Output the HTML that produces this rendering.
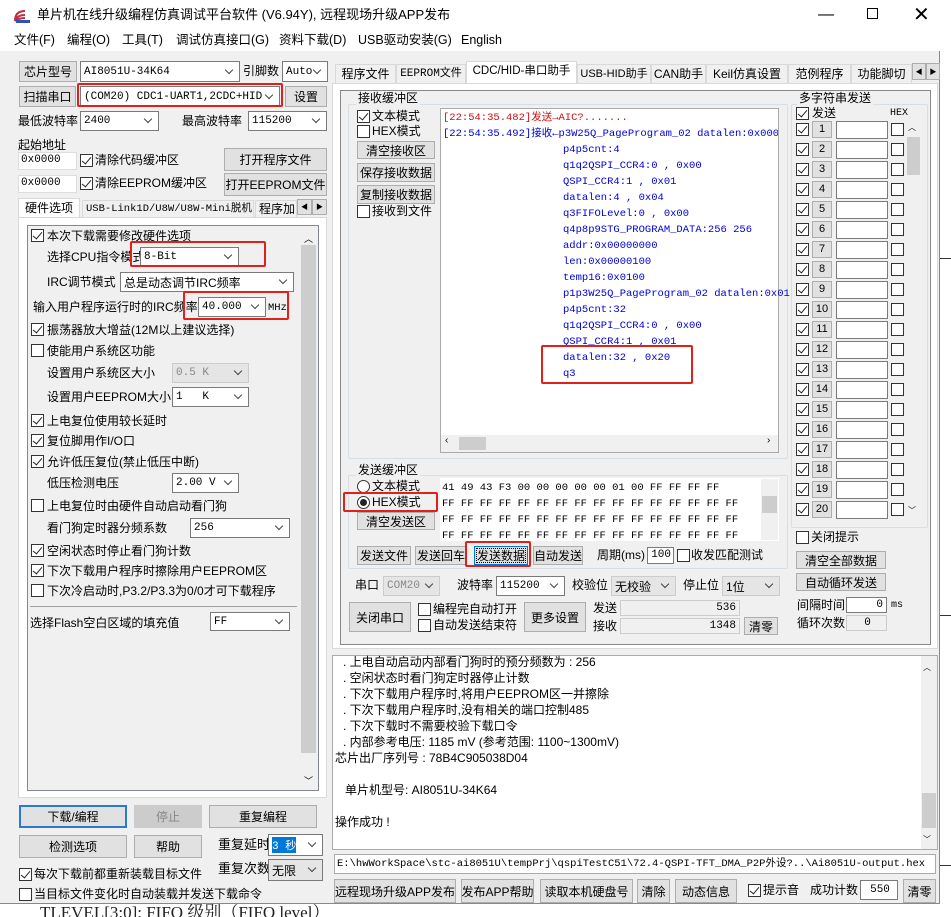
<!DOCTYPE html>
<html><head><meta charset="utf-8">
<style>
*{box-sizing:border-box;margin:0;padding:0}
body{width:951px;height:917px;overflow:hidden;background:#fff;font-family:"Liberation Sans","Noto Sans CJK SC",sans-serif;font-size:12px;color:#000;position:relative}
.a{position:absolute;white-space:nowrap}
.t{position:absolute;white-space:nowrap;line-height:14px}
.b{position:absolute;background:#e1e1e1;border:1px solid #adadad;text-align:center;white-space:nowrap;font-size:12px;display:flex;align-items:center;justify-content:center}
.sel{position:absolute;background:#fff;border:1px solid #7a7a7a;white-space:nowrap;padding-left:3px;font-size:11px;display:flex;align-items:center;font-family:"Liberation Mono","Noto Sans CJK SC",monospace}
.sel.g{background:#e5e5e5;border-color:#ccc;color:#888}
.sel::after{content:"";position:absolute;right:7px;top:calc(50% - 5px);width:5px;height:5px;border-right:1px solid #444;border-bottom:1px solid #444;transform:rotate(45deg)}
.cb{position:absolute;width:13px;height:13px;border:1px solid #333;background:#fff}
.cb.c::after{content:"";position:absolute;left:3px;top:0px;width:4px;height:8px;border-right:1.5px solid #222;border-bottom:1.5px solid #222;transform:rotate(40deg)}
.rd{position:absolute;width:13px;height:13px;border:1px solid #333;border-radius:50%;background:#fff}
.rd.c::after{content:"";position:absolute;left:2px;top:2px;width:7px;height:7px;border-radius:50%;background:#222}
.in{position:absolute;background:#fff;border:1px solid #7a7a7a;font-size:11px;font-family:"Liberation Mono",monospace;padding-left:2px;line-height:15px}
.red{position:absolute;border:2px solid #e0201a;border-radius:2px}
.grp{position:absolute;border:1px solid #d5dfe5;border-radius:2px}
.mono{font-family:"Liberation Mono","Noto Sans CJK SC",monospace;font-size:10.5px}
.tab{position:absolute;top:64px;height:19px;border:1px solid #d9d9d9;border-bottom:none;background:#f0f0f0;font-size:12px;text-align:center;line-height:18px;white-space:nowrap}
.rc{position:absolute;left:563px;color:#0000d8}
.n{position:absolute;width:20px;height:17px;background:#e1e1e1;border:1px solid #adadad;text-align:center;font-size:11px;line-height:15px}
</style></head><body>
<!-- background doc -->
<div class="a" style="left:940px;top:0;width:11px;height:917px;background:#fff"></div>
<div class="a" style="left:940px;top:258px;width:11px;height:1px;background:#333"></div>
<div class="a" style="left:940px;top:615px;width:11px;height:1px;background:#333"></div>
<div class="a" style="left:940px;top:865px;width:11px;height:1px;background:#333"></div>
<div class="a" style="left:0;top:903px;width:940px;height:14px;background:#fff;font-family:'Liberation Serif','Noto Serif CJK SC',serif;font-size:17px;line-height:20px;color:#222;overflow:hidden;padding-left:40px">TLEVEL[3:0]: FIFO 级别（FIFO level）</div>
<!-- window -->
<div class="a" style="left:0;top:0;width:940px;height:904px;background:#f0f0f0;border-right:1px solid #888;border-bottom:1px solid #888"></div>
<div class="a" style="left:0;top:0;width:940px;height:32px;background:#fff"></div>
<svg class="a" style="left:14px;top:8px" width="18" height="16" viewBox="0 0 18 16"><path d="M1 13 Q1 3 11 3 M1 13 Q3 7 11 7 M1 13 Q5 10 11 10" stroke="#c0303a" stroke-width="2" fill="none"/><rect x="2" y="12" width="14" height="3" fill="#3050c0"/></svg>
<div class="t" style="left:37px;top:8px;font-size:13px">单片机在线升级编程仿真调试平台软件 (V6.94Y), 远程现场升级APP发布</div>
<div class="a" style="left:818px;top:6px;font-size:16px">—</div>
<div class="a" style="left:867px;top:8px;width:11px;height:11px;border:1px solid #000"></div>
<div class="a" style="left:913px;top:2px;font-size:20px;font-weight:300">✕</div>
<div class="a" style="left:0;top:32px;width:940px;height:19px;background:#fff"></div>
<div class="t" style="left:14px;top:33px;font-size:12.5px">文件(F)</div>
<div class="t" style="left:67px;top:33px;font-size:12.5px">编程(O)</div>
<div class="t" style="left:122px;top:33px;font-size:12.5px">工具(T)</div>
<div class="t" style="left:176px;top:33px;font-size:12.5px">调试仿真接口(G)</div>
<div class="t" style="left:279px;top:33px;font-size:12.5px">资料下载(D)</div>
<div class="t" style="left:358px;top:33px;font-size:12.5px">USB驱动安装(G)</div>
<div class="t" style="left:461px;top:33px;font-size:12.5px">English</div>

<!-- left top -->
<div class="b" style="left:19px;top:61px;width:58px;height:21px">芯片型号</div>
<div class="sel" style="left:80px;top:61px;width:160px;height:21px">AI8051U-34K64</div>
<div class="t" style="left:243px;top:64px">引脚数</div>
<div class="sel" style="left:282px;top:61px;width:46px;height:21px">Auto</div>
<div class="b" style="left:19px;top:86px;width:57px;height:21px">扫描串口</div>
<div class="sel" style="left:80px;top:86px;width:200px;height:21px">(COM20) CDC1-UART1,2CDC+HID</div>
<div class="red" style="left:77px;top:83px;width:206px;height:24px"></div>
<div class="b" style="left:285px;top:86px;width:42px;height:21px">设置</div>
<div class="t" style="left:18px;top:114px">最低波特率</div>
<div class="sel" style="left:80px;top:111px;width:79px;height:20px">2400</div>
<div class="t" style="left:182px;top:114px">最高波特率</div>
<div class="sel" style="left:248px;top:111px;width:79px;height:20px">115200</div>
<div class="t" style="left:18px;top:138px">起始地址</div>
<div class="in" style="left:18px;top:152px;width:59px;height:18px;border-color:#ddd">0x0000</div>
<div class="cb c" style="left:80px;top:154px"></div><div class="t" style="left:95px;top:153px">清除代码缓冲区</div>
<div class="b" style="left:224px;top:148px;width:103px;height:23px">打开程序文件</div>
<div class="in" style="left:18px;top:175px;width:59px;height:18px;border-color:#ddd">0x0000</div>
<div class="cb c" style="left:80px;top:177px"></div><div class="t" style="left:95px;top:176px">清除EEPROM缓冲区</div>
<div class="b" style="left:224px;top:173px;width:103px;height:23px">打开EEPROM文件</div>
<!-- left tabs -->
<div class="a" style="left:18px;top:198px;width:62px;height:20px;background:#fff;border:1px solid #d9d9d9;border-bottom:none;text-align:center;line-height:18px">硬件选项</div>
<div class="a mono" style="left:82px;top:200px;width:172px;height:17px;border:1px solid #d9d9d9;border-bottom:none;line-height:16px;font-size:10.5px;padding-left:3px">USB-Link1D/U8W/U8W-Mini脱机</div>
<div class="a" style="left:255px;top:200px;width:42px;height:17px;border:1px solid #d9d9d9;border-bottom:none;line-height:16px;padding-left:3px;overflow:hidden">程序加</div>
<div class="b" style="left:297px;top:199px;width:15px;height:16px;font-size:7px">◀</div>
<div class="b" style="left:312px;top:199px;width:15px;height:16px;font-size:7px">▶</div>
<div class="a" style="left:18px;top:217px;width:309px;height:581px;background:#fff;border:1px solid #d9d9d9"></div>
<div class="a" style="left:27px;top:225px;width:292px;height:566px;background:#f0f0f0;border:1px solid #828790"></div>
<div class="a" style="left:300px;top:226px;width:18px;height:564px;background:#f0f0f0"></div>
<div class="a" style="left:301px;top:245px;width:15px;height:508px;background:#cdcdcd"></div>
<div class="a" style="left:304px;top:232px;font-size:9px">︿</div>
<div class="a" style="left:304px;top:774px;font-size:9px">﹀</div>
<div class="cb c" style="left:31px;top:229px"></div><div class="t" style="left:47px;top:229px">本次下载需要修改硬件选项</div>
<div class="t" style="left:47px;top:250px">选择CPU指令模式</div><div class="sel" style="left:140px;top:247px;width:99px;height:20px">8-Bit</div>
<div class="red" style="left:130px;top:241px;width:136px;height:26px"></div>
<div class="t" style="left:47px;top:275px">IRC调节模式</div><div class="sel" style="left:120px;top:272px;width:174px;height:20px;font-family:'Liberation Sans','Noto Sans CJK SC';font-size:12px">总是动态调节IRC频率</div>
<div class="t" style="left:33px;top:300px">输入用户程序运行时的IRC频率</div><div class="sel" style="left:198px;top:297px;width:68px;height:20px">40.000</div><div class="t mono" style="left:268px;top:301px">MHz</div>
<div class="red" style="left:183px;top:291px;width:106px;height:29px"></div>
<div class="cb c" style="left:31px;top:323px"></div><div class="t" style="left:47px;top:323px">振荡器放大增益(12M以上建议选择)</div>
<div class="cb" style="left:31px;top:344px"></div><div class="t" style="left:47px;top:344px">使能用户系统区功能</div>
<div class="t" style="left:47px;top:366px">设置用户系统区大小</div><div class="sel g" style="left:172px;top:363px;width:77px;height:20px">0.5 K</div>
<div class="t" style="left:47px;top:390px">设置用户EEPROM大小</div><div class="sel" style="left:172px;top:387px;width:77px;height:20px">1&nbsp;&nbsp;&nbsp;K</div>
<div class="cb c" style="left:31px;top:414px"></div><div class="t" style="left:47px;top:414px">上电复位使用较长延时</div>
<div class="cb c" style="left:31px;top:434px"></div><div class="t" style="left:47px;top:434px">复位脚用作I/O口</div>
<div class="cb c" style="left:31px;top:455px"></div><div class="t" style="left:47px;top:455px">允许低压复位(禁止低压中断)</div>
<div class="t" style="left:47px;top:476px">低压检测电压</div><div class="sel" style="left:172px;top:473px;width:67px;height:20px">2.00 V</div>
<div class="cb" style="left:31px;top:499px"></div><div class="t" style="left:47px;top:499px">上电复位时由硬件自动启动看门狗</div>
<div class="t" style="left:47px;top:521px">看门狗定时器分频系数</div><div class="sel" style="left:190px;top:518px;width:100px;height:20px">256</div>
<div class="cb c" style="left:31px;top:544px"></div><div class="t" style="left:47px;top:544px">空闲状态时停止看门狗计数</div>
<div class="cb c" style="left:31px;top:564px"></div><div class="t" style="left:47px;top:564px">下次下载用户程序时擦除用户EEPROM区</div>
<div class="cb" style="left:31px;top:584px"></div><div class="t" style="left:47px;top:584px">下次冷启动时,P3.2/P3.3为0/0才可下载程序</div>
<div class="a" style="left:30px;top:606px;width:267px;height:1px;background:#a0a0a0"></div>
<div class="t" style="left:30px;top:616px">选择Flash空白区域的填充值</div><div class="sel" style="left:210px;top:612px;width:80px;height:19px">FF</div>
<!-- left bottom -->
<div class="b" style="left:19px;top:805px;width:108px;height:23px;border:2px solid #2a7bd0">下载/编程</div>
<div class="b" style="left:134px;top:805px;width:68px;height:23px;background:#ccc;border-color:#ccc;color:#888">停止</div>
<div class="b" style="left:209px;top:805px;width:108px;height:23px">重复编程</div>
<div class="b" style="left:19px;top:835px;width:108px;height:23px">检测选项</div>
<div class="b" style="left:134px;top:835px;width:68px;height:23px">帮助</div>
<div class="t" style="left:218px;top:838px;font-size:13px">重复延时</div>
<div class="sel" style="left:268px;top:834px;width:55px;height:22px"><span style="background:#0078d7;color:#fff">3 秒</span></div>
<div class="cb c" style="left:19px;top:868px"></div><div class="t" style="left:34px;top:867px">每次下载前都重新装载目标文件</div>
<div class="t" style="left:218px;top:862px;font-size:13px">重复次数</div>
<div class="sel" style="left:268px;top:859px;width:55px;height:22px;background:#e5e5e5;font-family:'Liberation Sans','Noto Sans CJK SC';font-size:12px">无限</div>
<div class="cb" style="left:19px;top:888px"></div><div class="t" style="left:34px;top:887px">当目标文件变化时自动装载并发送下载命令</div>

<!-- right tabs -->
<div class="tab" style="left:335px;width:61px">程序文件</div>
<div class="tab mono" style="left:396px;width:70px;font-size:11px">EEPROM文件</div>
<div class="tab" style="left:466px;top:61px;height:22px;width:111px;background:#fff;font-size:11.5px">CDC/HID-串口助手</div>
<div class="tab" style="left:577px;width:74px;font-size:11px">USB-HID助手</div>
<div class="tab" style="left:651px;width:55px">CAN助手</div>
<div class="tab" style="left:706px;width:82px">Keil仿真设置</div>
<div class="tab" style="left:788px;width:63px">范例程序</div>
<div class="tab" style="left:851px;width:61px;overflow:hidden">功能脚切</div>
<div class="b" style="left:912px;top:63px;width:14px;height:17px;font-size:7px">◀</div>
<div class="b" style="left:926px;top:63px;width:14px;height:17px;font-size:7px">▶</div>
<div class="a" style="left:332px;top:83px;width:606px;height:566px;background:#fff;border:1px solid #d9d9d9"></div>
<div class="a" style="left:340px;top:90px;width:493px;height:555px;background:#f0f0f0;border:1px solid #888"></div>
<div class="a" style="left:789px;top:90px;width:142px;height:555px;background:#f0f0f0;border:1px solid #888;border-left:none"></div>
<!-- receive group -->
<div class="grp" style="left:348px;top:104px;width:440px;height:355px"></div>
<div class="t" style="left:356px;top:91px;background:#f0f0f0;padding:0 2px">接收缓冲区</div>
<div class="cb c" style="left:357px;top:110px"></div><div class="t" style="left:372px;top:109px">文本模式</div>
<div class="cb" style="left:357px;top:125px"></div><div class="t" style="left:372px;top:124px">HEX模式</div>
<div class="b" style="left:357px;top:141px;width:78px;height:18px">清空接收区</div>
<div class="b" style="left:357px;top:163px;width:78px;height:19px">保存接收数据</div>
<div class="b" style="left:357px;top:185px;width:78px;height:19px">复制接收数据</div>
<div class="cb" style="left:357px;top:205px"></div><div class="t" style="left:372px;top:204px">接收到文件</div>
<div class="a mono" style="left:440px;top:108px;width:339px;height:345px;background:#fff;border:1px solid #aaa;overflow:hidden;line-height:16px">
<div class="a" style="left:2px;top:1px;color:#d01010">[22:54:35.482]发送→AIC?.......</div>
<div class="a" style="left:2px;top:17px;color:#0000d8">[22:54:35.492]接收←p3W25Q_PageProgram_02 datalen:0x0004</div>
</div>
<div class="a mono" style="left:0;top:0;line-height:16px">
<div class="rc" style="top:142px">p4p5cnt:4</div>
<div class="rc" style="top:158px">q1q2QSPI_CCR4:0 , 0x00</div>
<div class="rc" style="top:174px">QSPI_CCR4:1 , 0x01</div>
<div class="rc" style="top:190px">datalen:4 , 0x04</div>
<div class="rc" style="top:206px">q3FIFOLevel:0 , 0x00</div>
<div class="rc" style="top:222px">q4p8p9STG_PROGRAM_DATA:256 256</div>
<div class="rc" style="top:238px">addr:0x00000000</div>
<div class="rc" style="top:254px">len:0x00000100</div>
<div class="rc" style="top:270px">temp16:0x0100</div>
<div class="rc" style="top:286px">p1p3W25Q_PageProgram_02 datalen:0x01</div>
<div class="rc" style="top:302px">p4p5cnt:32</div>
<div class="rc" style="top:318px">q1q2QSPI_CCR4:0 , 0x00</div>
<div class="rc" style="top:334px">QSPI_CCR4:1 , 0x01</div>
<div class="rc" style="top:350px">datalen:32 , 0x20</div>
<div class="rc" style="top:366px">q3</div>
</div>
<div class="red" style="left:541px;top:345px;width:152px;height:39px"></div>
<div class="a" style="left:441px;top:435px;width:337px;height:17px;background:#f0f0f0"></div>
<div class="a" style="left:459px;top:437px;width:27px;height:13px;background:#cdcdcd"></div>
<div class="a" style="left:445px;top:435px;font-size:10px">‹</div><div class="a" style="left:767px;top:435px;font-size:10px">›</div>
<!-- send group -->
<div class="grp" style="left:348px;top:475px;width:440px;height:94px"></div>
<div class="t" style="left:356px;top:463px;background:#f0f0f0;padding:0 2px">发送缓冲区</div>
<div class="rd" style="left:357px;top:480px"></div><div class="t" style="left:372px;top:479px">文本模式</div>
<div class="rd c" style="left:357px;top:496px"></div><div class="t" style="left:372px;top:495px">HEX模式</div>
<div class="red" style="left:343px;top:492px;width:95px;height:20px"></div>
<div class="b" style="left:357px;top:512px;width:78px;height:18px">清空发送区</div>
<div class="a mono" style="left:440px;top:478px;width:339px;height:63px;background:#fff;overflow:hidden;line-height:16px;padding:2px 0 0 2px">41 49 43 F3 00 00 00 00 00 01 00 FF FF FF FF<br>FF FF FF FF FF FF FF FF FF FF FF FF FF FF FF FF<br>FF FF FF FF FF FF FF FF FF FF FF FF FF FF FF FF<br>FF FF FF FF FF FF FF FF FF FF FF FF FF FF FF FF</div>
<div class="a" style="left:761px;top:479px;width:17px;height:61px;background:#f0f0f0"></div>
<div class="a" style="left:762px;top:496px;width:15px;height:17px;background:#cdcdcd"></div>
<div class="b" style="left:357px;top:546px;width:54px;height:19px">发送文件</div>
<div class="b" style="left:415px;top:546px;width:52px;height:19px">发送回车</div>
<div class="b" style="left:474px;top:546px;width:54px;height:19px;border:1px solid #0078d7;outline:1px dotted #000;outline-offset:-3px">发送数据</div>
<div class="red" style="left:465px;top:541px;width:66px;height:26px"></div>
<div class="b" style="left:533px;top:546px;width:50px;height:19px">自动发送</div>
<div class="t" style="left:597px;top:548px">周期(ms)</div>
<div class="in" style="left:647px;top:547px;width:27px;height:17px;text-align:right;padding-right:2px">100</div>
<div class="cb" style="left:677px;top:549px"></div><div class="t" style="left:691px;top:548px">收发匹配测试</div>
<div class="t" style="left:355px;top:578px">串口</div>
<div class="sel g" style="left:383px;top:576px;width:57px;height:20px">COM20</div>
<div class="t" style="left:457px;top:578px">波特率</div>
<div class="sel" style="left:496px;top:576px;width:69px;height:20px">115200</div>
<div class="t" style="left:572px;top:578px">校验位</div>
<div class="sel" style="left:611px;top:576px;width:65px;height:20px;background:#e5e5e5;border-color:#ccc;font-family:'Liberation Sans','Noto Sans CJK SC';font-size:12px">无校验</div>
<div class="t" style="left:683px;top:578px">停止位</div>
<div class="sel" style="left:722px;top:576px;width:58px;height:20px;background:#e5e5e5;border-color:#ccc;font-family:'Liberation Sans','Noto Sans CJK SC';font-size:12px">1位</div>
<div class="b" style="left:349px;top:602px;width:62px;height:30px">关闭串口</div>
<div class="cb" style="left:418px;top:603px"></div><div class="t" style="left:433px;top:602px">编程完自动打开</div>
<div class="cb" style="left:418px;top:619px"></div><div class="t" style="left:433px;top:618px">自动发送结束符</div>
<div class="b" style="left:524px;top:602px;width:62px;height:30px">更多设置</div>
<div class="t" style="left:593px;top:601px">发送</div>
<div class="in" style="left:620px;top:600px;width:120px;height:16px;background:#f0f0f0;border-color:#ccc;text-align:right;padding-right:3px;line-height:14px">536</div>
<div class="t" style="left:593px;top:619px">接收</div>
<div class="in" style="left:620px;top:618px;width:120px;height:16px;background:#f0f0f0;border-color:#ccc;text-align:right;padding-right:3px;line-height:14px">1348</div>
<div class="b" style="left:744px;top:617px;width:34px;height:18px">清零</div>
<!-- multi string -->
<div class="grp" style="left:791px;top:104px;width:137px;height:424px"></div>
<div class="t" style="left:797px;top:91px;background:#f0f0f0;padding:0 2px">多字符串发送</div>
<div class="cb c" style="left:796px;top:107px"></div><div class="t" style="left:812px;top:106px">发送</div>
<div class="t mono" style="left:890px;top:107px;font-size:10px">HEX</div>
<div class="a" style="left:906px;top:124px;width:15px;height:396px;background:#f0f0f0"></div>
<div class="a" style="left:907px;top:137px;width:13px;height:38px;background:#cdcdcd"></div>
<div class="a" style="left:908px;top:122px;font-size:8px">︿</div><div class="a" style="left:908px;top:505px;font-size:8px">﹀</div>
<div id="ms"></div>
<div class="cb" style="left:796px;top:531px"></div><div class="t" style="left:811px;top:530px">关闭提示</div>
<div class="b" style="left:796px;top:551px;width:90px;height:18px">清空全部数据</div>
<div class="b" style="left:796px;top:573px;width:90px;height:18px">自动循环发送</div>
<div class="t" style="left:797px;top:598px">间隔时间</div>
<div class="in" style="left:846px;top:597px;width:41px;height:16px;text-align:right;padding-right:3px;line-height:14px">0</div>
<div class="t mono" style="left:891px;top:599px;font-size:10px">ms</div>
<div class="t" style="left:797px;top:616px">循环次数</div>
<div class="in" style="left:846px;top:615px;width:41px;height:16px;background:#f0f0f0;border-color:#ccc;text-align:center;line-height:14px">0</div>
<!-- log -->
<div class="a" style="left:332px;top:655px;width:606px;height:195px;background:#fff;border:1px solid #aaa"></div>
<div class="a" style="left:921px;top:656px;width:16px;height:193px;background:#f0f0f0"></div>
<div class="a" style="left:922px;top:793px;width:14px;height:35px;background:#cdcdcd"></div>
<div class="a" style="left:923px;top:662px;font-size:8px">︿</div><div class="a" style="left:923px;top:834px;font-size:8px">﹀</div>
<div class="t" style="left:343px;top:655px">. 上电自动启动内部看门狗时的预分频数为 : 256</div>
<div class="t" style="left:343px;top:671px">. 空闲状态时看门狗定时器停止计数</div>
<div class="t" style="left:343px;top:687px">. 下次下载用户程序时,将用户EEPROM区一并擦除</div>
<div class="t" style="left:343px;top:703px">. 下次下载用户程序时,没有相关的端口控制485</div>
<div class="t" style="left:343px;top:719px">. 下次下载时不需要校验下载口令</div>
<div class="t" style="left:343px;top:735px">. 内部参考电压: 1185 mV (参考范围: 1100~1300mV)</div>
<div class="t" style="left:335px;top:751px">芯片出厂序列号 : 78B4C905038D04</div>
<div class="t" style="left:345px;top:783px">单片机型号: AI8051U-34K64</div>
<div class="t" style="left:335px;top:815px">操作成功 !</div>
<div class="a mono" style="left:334px;top:854px;width:602px;height:20px;background:#fff;border:1px solid #aaa;line-height:18px;padding-left:2px;font-size:10.5px">E:\hwWorkSpace\stc-ai8051U\tempPrj\qspiTestC51\72.4-QSPI-TFT_DMA_P2P外设?..\Ai8051U-output.hex</div>
<div class="b" style="left:334px;top:879px;width:122px;height:24px">远程现场升级APP发布</div>
<div class="b" style="left:461px;top:879px;width:73px;height:24px">发布APP帮助</div>
<div class="b" style="left:540px;top:879px;width:93px;height:24px">读取本机硬盘号</div>
<div class="b" style="left:637px;top:879px;width:33px;height:24px">清除</div>
<div class="b" style="left:675px;top:879px;width:62px;height:24px">动态信息</div>
<div class="cb c" style="left:748px;top:884px"></div><div class="t" style="left:763px;top:883px">提示音</div>
<div class="t" style="left:810px;top:883px">成功计数</div>
<div class="in" style="left:860px;top:880px;width:38px;height:20px;text-align:center;line-height:18px">550</div>
<div class="b" style="left:903px;top:879px;width:33px;height:24px">清零</div>

<!-- multi rows -->
<div class="cb c" style="left:796px;top:123px"></div><div class="n" style="left:812px;top:121px">1</div><div class="in" style="left:836px;top:121px;width:52px;height:18px"></div><div class="cb" style="left:891px;top:123px"></div>
<div class="cb c" style="left:796px;top:143px"></div><div class="n" style="left:812px;top:141px">2</div><div class="in" style="left:836px;top:141px;width:52px;height:18px"></div><div class="cb" style="left:891px;top:143px"></div>
<div class="cb c" style="left:796px;top:163px"></div><div class="n" style="left:812px;top:161px">3</div><div class="in" style="left:836px;top:161px;width:52px;height:18px"></div><div class="cb" style="left:891px;top:163px"></div>
<div class="cb c" style="left:796px;top:183px"></div><div class="n" style="left:812px;top:181px">4</div><div class="in" style="left:836px;top:181px;width:52px;height:18px"></div><div class="cb" style="left:891px;top:183px"></div>
<div class="cb c" style="left:796px;top:203px"></div><div class="n" style="left:812px;top:201px">5</div><div class="in" style="left:836px;top:201px;width:52px;height:18px"></div><div class="cb" style="left:891px;top:203px"></div>
<div class="cb c" style="left:796px;top:223px"></div><div class="n" style="left:812px;top:221px">6</div><div class="in" style="left:836px;top:221px;width:52px;height:18px"></div><div class="cb" style="left:891px;top:223px"></div>
<div class="cb c" style="left:796px;top:243px"></div><div class="n" style="left:812px;top:241px">7</div><div class="in" style="left:836px;top:241px;width:52px;height:18px"></div><div class="cb" style="left:891px;top:243px"></div>
<div class="cb c" style="left:796px;top:263px"></div><div class="n" style="left:812px;top:261px">8</div><div class="in" style="left:836px;top:261px;width:52px;height:18px"></div><div class="cb" style="left:891px;top:263px"></div>
<div class="cb c" style="left:796px;top:283px"></div><div class="n" style="left:812px;top:281px">9</div><div class="in" style="left:836px;top:281px;width:52px;height:18px"></div><div class="cb" style="left:891px;top:283px"></div>
<div class="cb c" style="left:796px;top:303px"></div><div class="n" style="left:812px;top:301px">10</div><div class="in" style="left:836px;top:301px;width:52px;height:18px"></div><div class="cb" style="left:891px;top:303px"></div>
<div class="cb c" style="left:796px;top:323px"></div><div class="n" style="left:812px;top:321px">11</div><div class="in" style="left:836px;top:321px;width:52px;height:18px"></div><div class="cb" style="left:891px;top:323px"></div>
<div class="cb c" style="left:796px;top:343px"></div><div class="n" style="left:812px;top:341px">12</div><div class="in" style="left:836px;top:341px;width:52px;height:18px"></div><div class="cb" style="left:891px;top:343px"></div>
<div class="cb c" style="left:796px;top:363px"></div><div class="n" style="left:812px;top:361px">13</div><div class="in" style="left:836px;top:361px;width:52px;height:18px"></div><div class="cb" style="left:891px;top:363px"></div>
<div class="cb c" style="left:796px;top:383px"></div><div class="n" style="left:812px;top:381px">14</div><div class="in" style="left:836px;top:381px;width:52px;height:18px"></div><div class="cb" style="left:891px;top:383px"></div>
<div class="cb c" style="left:796px;top:403px"></div><div class="n" style="left:812px;top:401px">15</div><div class="in" style="left:836px;top:401px;width:52px;height:18px"></div><div class="cb" style="left:891px;top:403px"></div>
<div class="cb c" style="left:796px;top:423px"></div><div class="n" style="left:812px;top:421px">16</div><div class="in" style="left:836px;top:421px;width:52px;height:18px"></div><div class="cb" style="left:891px;top:423px"></div>
<div class="cb c" style="left:796px;top:443px"></div><div class="n" style="left:812px;top:441px">17</div><div class="in" style="left:836px;top:441px;width:52px;height:18px"></div><div class="cb" style="left:891px;top:443px"></div>
<div class="cb c" style="left:796px;top:463px"></div><div class="n" style="left:812px;top:461px">18</div><div class="in" style="left:836px;top:461px;width:52px;height:18px"></div><div class="cb" style="left:891px;top:463px"></div>
<div class="cb c" style="left:796px;top:483px"></div><div class="n" style="left:812px;top:481px">19</div><div class="in" style="left:836px;top:481px;width:52px;height:18px"></div><div class="cb" style="left:891px;top:483px"></div>
<div class="cb c" style="left:796px;top:503px"></div><div class="n" style="left:812px;top:501px">20</div><div class="in" style="left:836px;top:501px;width:52px;height:18px"></div><div class="cb" style="left:891px;top:503px"></div>
</body></html>
